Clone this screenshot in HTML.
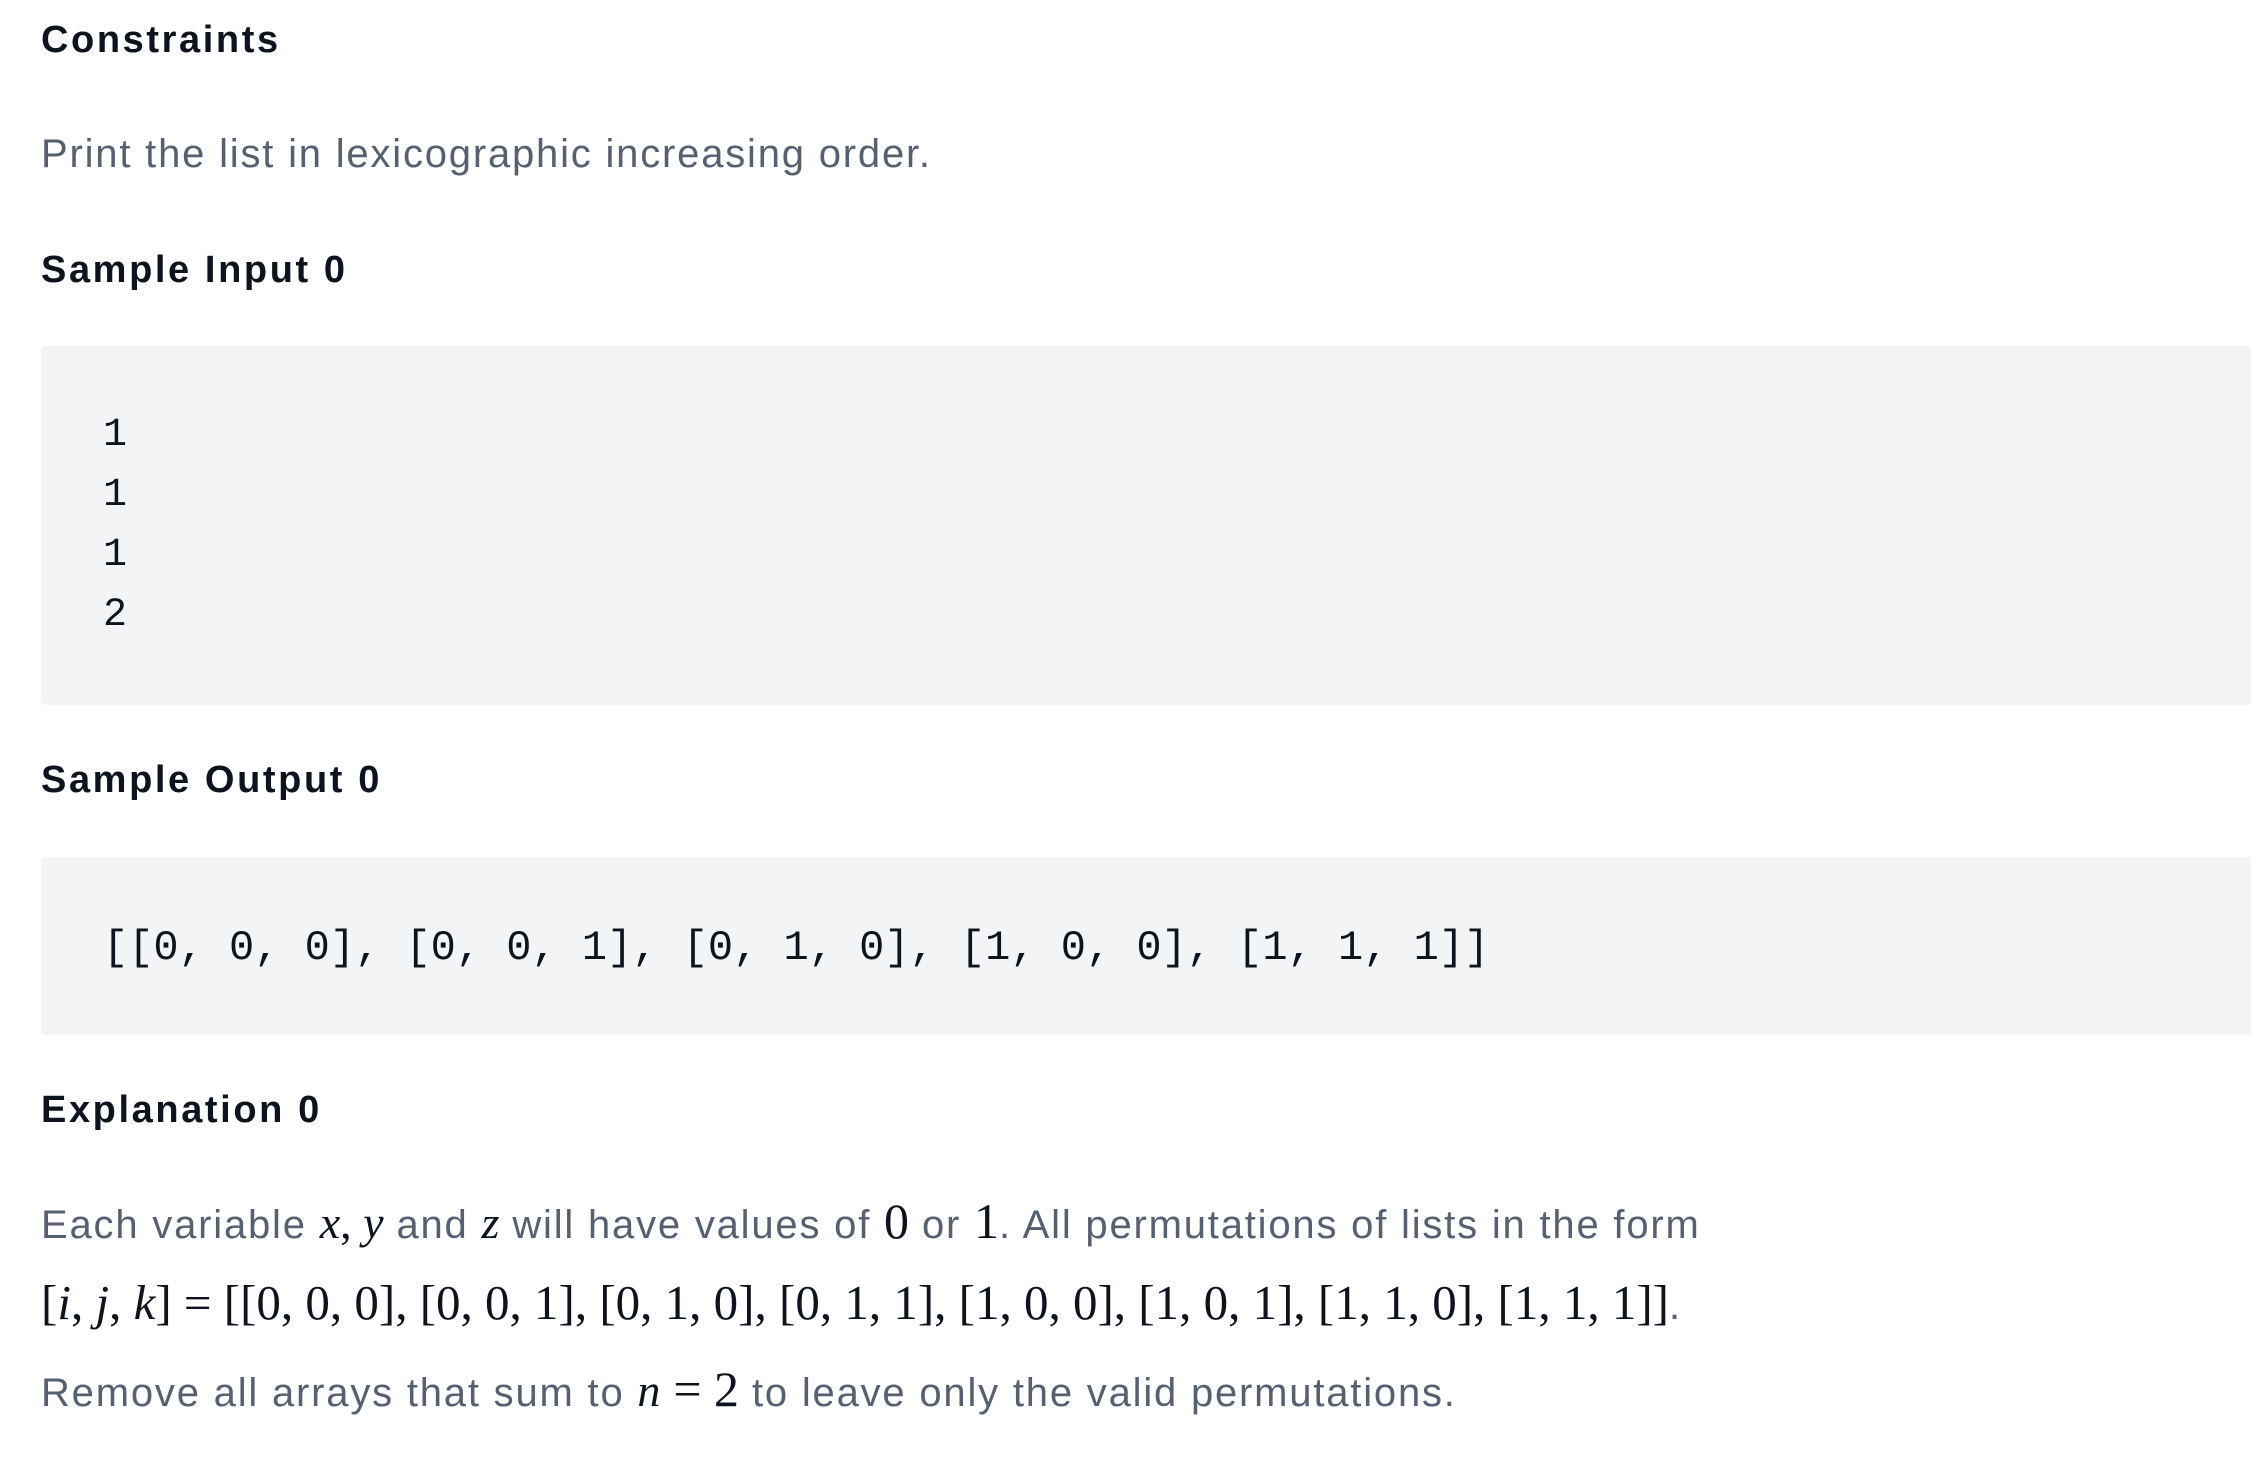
<!DOCTYPE html>
<html><head><meta charset="utf-8"><style>
html,body{margin:0;padding:0;background:#fff;width:2251px;height:1461px;overflow:hidden}
body{font-family:"Liberation Sans",sans-serif;position:relative}
.h{position:absolute;left:41px;font-weight:bold;font-size:38px;letter-spacing:2.6px;color:#0e141e;line-height:44px}
.p{position:absolute;left:41px;font-size:40px;letter-spacing:1.8px;color:#576071;line-height:50px;white-space:nowrap}
.code{position:absolute;left:41px;right:0;background:#f3f4f6;border-radius:6px 0 0 6px}
.mono{font-family:"Liberation Mono",monospace;color:#0e141e;font-size:40px;position:absolute;left:62px;white-space:pre}
.m{font-family:"Liberation Serif",serif;color:#0e141e;font-size:46px;letter-spacing:0}
.i{font-style:italic}
</style></head><body>
<div class="h" style="top:18px">Constraints</div>
<div class="p" style="top:129px">Print the list in lexicographic increasing order.</div>
<div class="h" style="top:248px">Sample Input 0</div>
<div class="code" style="top:346px;height:359px">
<div class="mono" style="top:60px;line-height:60px">1
1
1
2</div></div>
<div class="h" style="top:758px">Sample Output 0</div>
<div class="code" style="top:857px;height:178px">
<div class="mono" style="top:66px;line-height:50px;font-size:42px">[[0, 0, 0], [0, 0, 1], [0, 1, 0], [1, 0, 0], [1, 1, 1]]</div></div>
<div class="h" style="top:1088px">Explanation 0</div>
<div class="p" style="top:1196px">Each variable <span class="m i">x</span><span class="m">, </span><span class="m i">y</span> and <span class="m i">z</span> will have values of <span class="m" style="font-size:50px">0</span> or <span class="m" style="font-size:50px">1</span>. All permutations of lists in the form</div>
<div class="p" style="top:1278px"><span class="m" style="font-size:49px">[<i>i</i>, <i>j</i>, <i>k</i>] = [[0, 0, 0], [0, 0, 1], [0, 1, 0], [0, 1, 1], [1, 0, 0], [1, 0, 1], [1, 1, 0], [1, 1, 1]]</span>.</div>
<div class="p" style="top:1364px">Remove all arrays that sum to <span class="m i">n</span> <span class="m" style="font-size:50px">= 2</span> to leave only the valid permutations.</div>
</body></html>
